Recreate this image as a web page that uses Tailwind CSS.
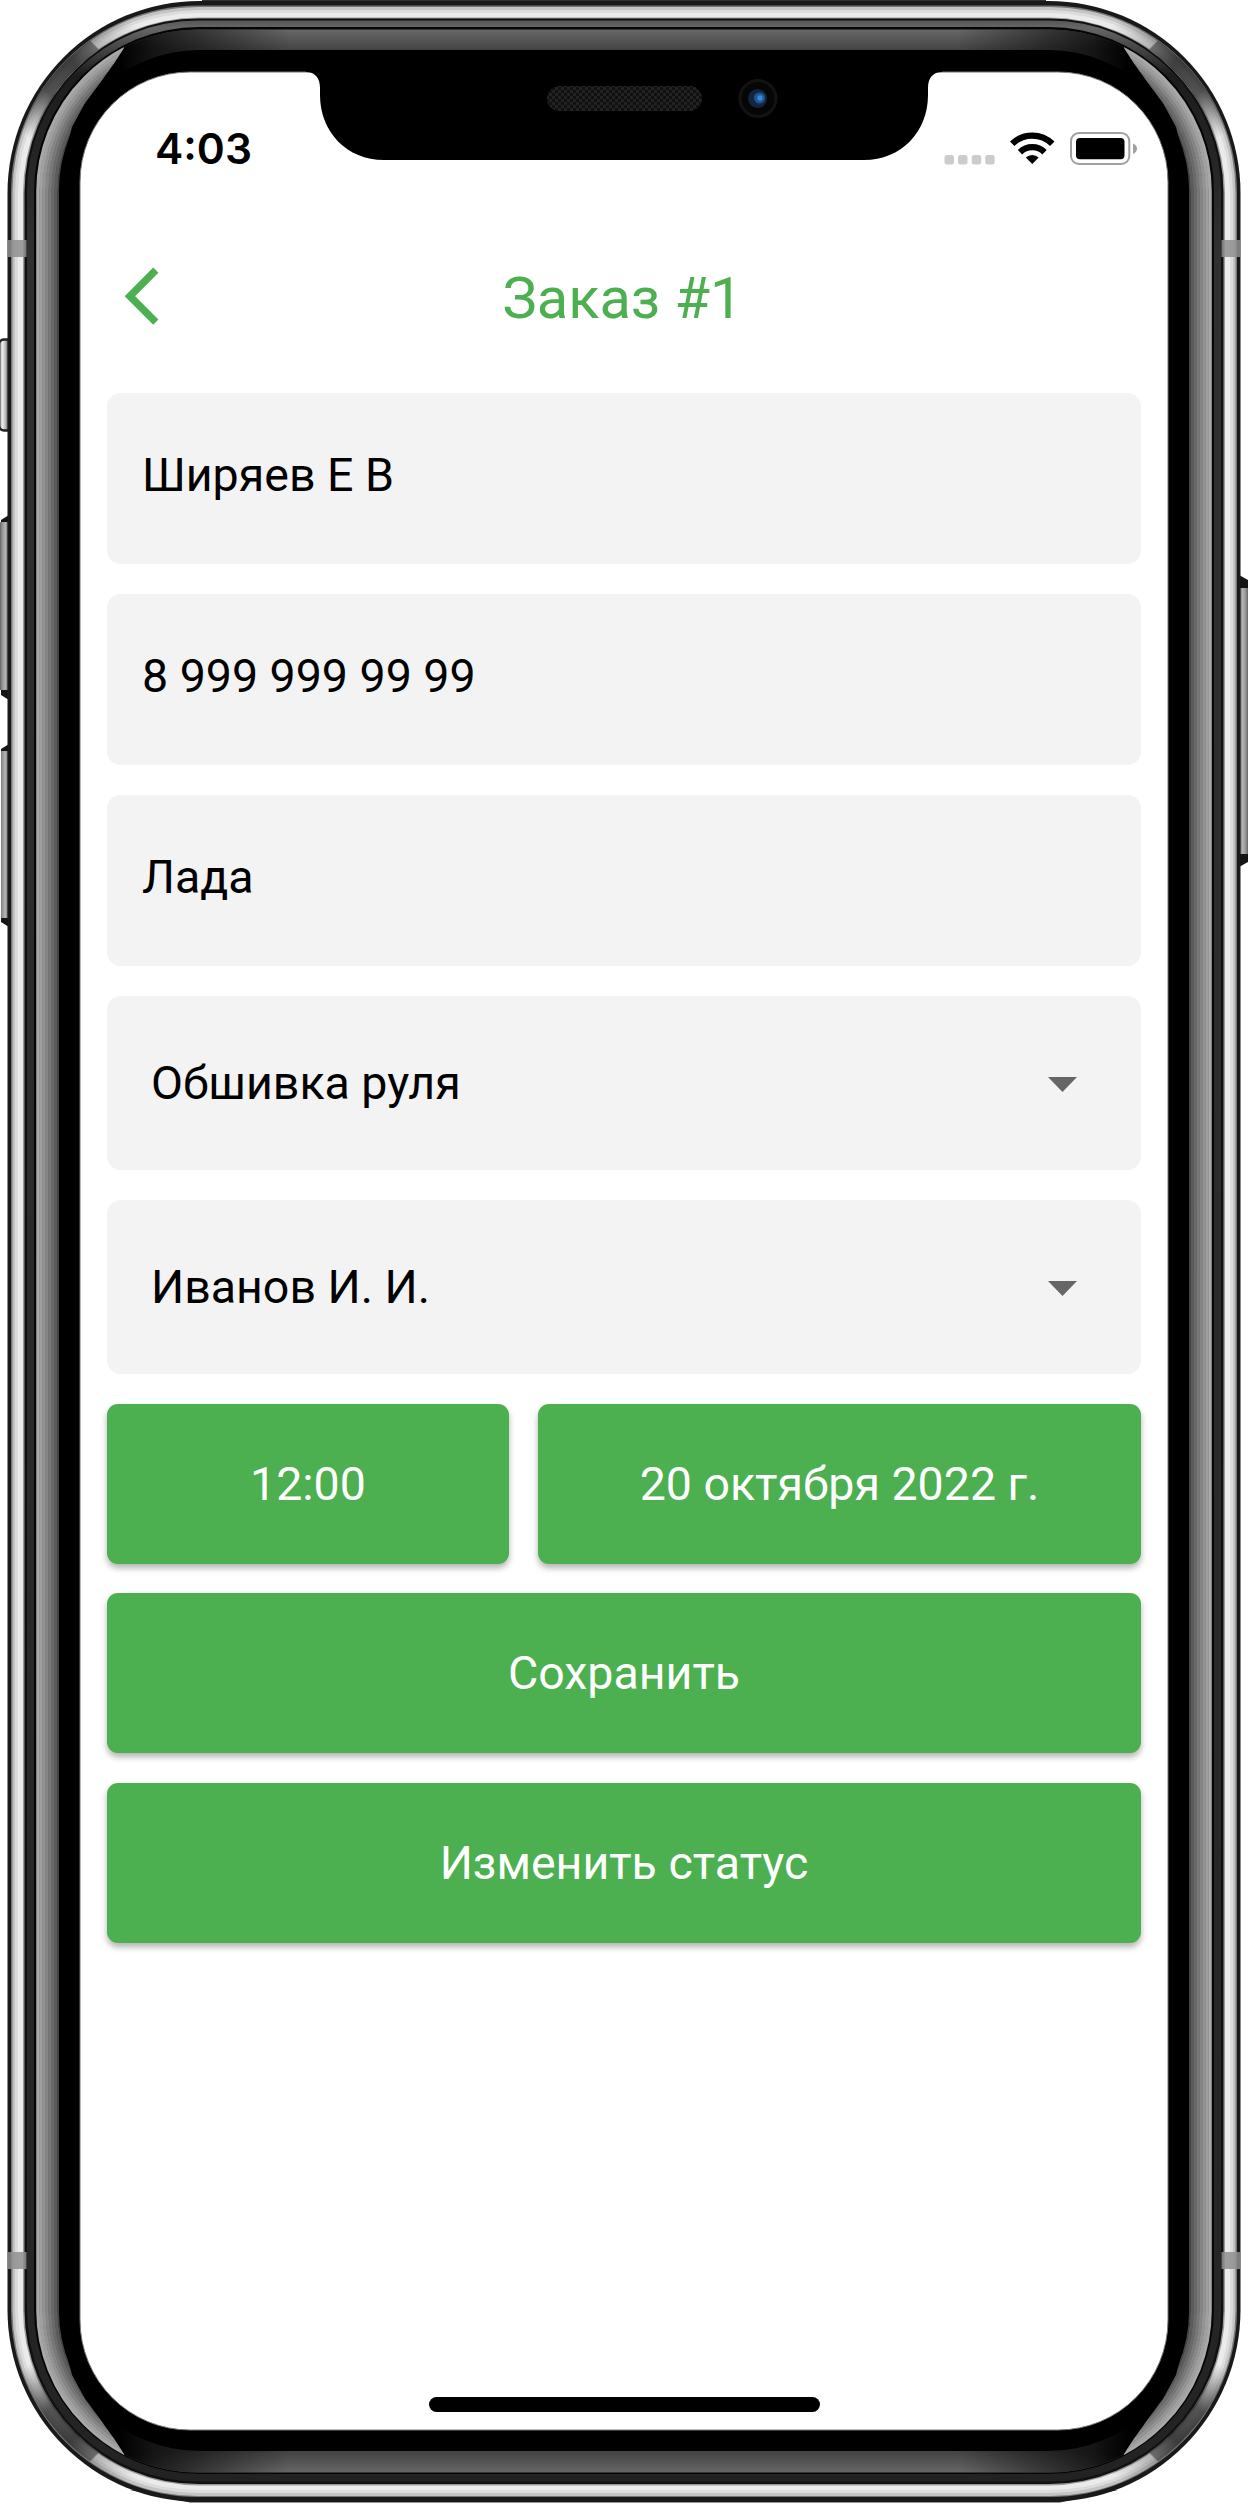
<!DOCTYPE html>
<html lang="ru">
<head>
<meta charset="utf-8">
<title>Заказ #1</title>
<script src="https://cdn.jsdelivr.net/npm/@tailwindcss/browser@4"></script>
</head>
<body class="bg-white">
<div class="relative w-[1248px] h-[2508px] overflow-hidden bg-white font-[Roboto,sans-serif]">

  <!-- Device body -->
  <svg class="absolute inset-0" width="1248" height="2508" viewBox="0 0 1248 2508" fill="none">
    <defs>
      <linearGradient id="top" x1="0" y1="0" x2="0" y2="2502" gradientUnits="userSpaceOnUse">
        <stop offset="0.0116" stop-color="#686868"/><stop offset="0.0198" stop-color="#444"/>
        <stop offset="0.9802" stop-color="#444"/><stop offset="0.9884" stop-color="#686868"/>
      </linearGradient>
      <linearGradient id="fade" x1="120" y1="0" x2="290" y2="0" gradientUnits="userSpaceOnUse">
        <stop offset="0" stop-color="#000"/><stop offset="0.2" stop-color="#000" stop-opacity=".7"/><stop offset="1" stop-color="#000" stop-opacity="0"/>
      </linearGradient>
      <linearGradient id="edge" x1="0" y1="0" x2="0" y2="2502" gradientUnits="userSpaceOnUse">
        <stop offset="0.008" stop-color="#555"/><stop offset="0.011" stop-color="#666"/><stop offset="0.03" stop-color="#1c1c1c"/><stop offset="0.1" stop-color="#303030"/>
        <stop offset="0.9" stop-color="#262626"/><stop offset="1" stop-color="#222"/>
      </linearGradient>
      <linearGradient id="shine" x1="20" y1="130" x2="130" y2="20" gradientUnits="userSpaceOnUse">
        <stop offset="0" stop-color="#333" stop-opacity="0"/><stop offset=".3" stop-color="#222" stop-opacity=".75"/><stop offset=".55" stop-color="#222" stop-opacity=".85"/><stop offset=".72" stop-color="#333" stop-opacity=".7"/><stop offset=".73" stop-color="#333" stop-opacity=".3"/><stop offset="1" stop-color="#333" stop-opacity="0"/>
      </linearGradient>
      <linearGradient id="key" x1="0" y1="0" x2="9" y2="0" gradientUnits="userSpaceOnUse">
        <stop offset="0" stop-color="#666"/><stop offset=".3" stop-color="#999"/><stop offset=".6" stop-color="#b5b5b5"/><stop offset=".85" stop-color="#777"/><stop offset="1" stop-color="#333"/>
      </linearGradient>
      <linearGradient id="toggle" x1="0" y1="0" x2="9" y2="0" gradientUnits="userSpaceOnUse">
        <stop offset="0" stop-color="#999"/><stop offset=".25" stop-color="#f0f0f0"/><stop offset=".6" stop-color="#bbb"/><stop offset="1" stop-color="#444"/>
      </linearGradient>
      <clipPath id="side"><path d="M0 0H110L124 48L115 62L100 83L85 103L72 127L62 165V2337L72 2375L85 2399L100 2419L115 2440L124 2454L110 2502H0Z"/></clipPath>
      <clipPath id="corner"><path d="M0 0H220V220H0Z"/></clipPath>
      <pattern id="mesh" width="6" height="6" patternUnits="userSpaceOnUse"><path d="M0 0H3V3H0ZM3 3H6V6H3Z" fill="#222"/></pattern>
      <g id="half">
        <g clip-path="url(#side)" stroke-width="3.5">
          <rect x="38" y="30.500" width="1172" height="2441" rx="161" stroke="#a8a8a8"/>
          <rect x="41" y="33.500" width="1166" height="2435" rx="158" stroke="#a0a0a0"/>
          <rect x="44" y="36.500" width="1160" height="2429" rx="155" stroke="#949494"/>
          <rect x="47" y="39.500" width="1154" height="2423" rx="152" stroke="#868686"/>
          <rect x="50" y="42.500" width="1148" height="2417" rx="149" stroke="#787878"/>
          <rect x="53" y="45.500" width="1142" height="2411" rx="146" stroke="#6a6a6a"/>
          <rect x="56" y="48.500" width="1136" height="2405" rx="143" stroke="#5c5c5c"/>
          <rect x="58.500" y="51" width="1131" height="2400" rx="140" stroke="#444" stroke-width="2"/>
        </g>
        <rect x="7.500" y="240" width="19" height="17" fill="#8f8f8f" fill-opacity=".85"/>
        <rect x="7.500" y="2252" width="19" height="17" fill="#8f8f8f" fill-opacity=".85"/>
      </g>
      <g id="glare" clip-path="url(#corner)"><rect x="17.700" y="12" width="1212.600" height="2478" rx="181" stroke="url(#shine)" stroke-width="12.500"/></g>
    </defs>

    <!-- Side buttons -->
    <rect x="-1" y="339.500" width="14" height="91" rx="5" fill="url(#toggle)" stroke="#222" stroke-width="2.500"/>
    <path d="M1 520L9 515V700L1 695Z" fill="#151515"/><path d="M0 522H9V690H0Z" fill="url(#key)"/>
    <path d="M1 749L9 744V927L1 922Z" fill="#151515"/><path d="M1 751H9V918H1Z" fill="url(#key)"/>
    <path d="M1248 580L1239 575V867L1248 862Z" fill="#151515"/><g transform="translate(1248 0) scale(-1 1)"><path d="M0 588H9V854H0Z" fill="url(#key)"/></g>

    <!-- Concentric frame -->
    <path d="M202 0H1046V6H202ZM130 2490H1118L1060 2502.500H190Z" fill="#333"/>
    <rect x="7.500" y="1" width="1233" height="2501" rx="192" fill="#191919"/>
    <rect x="11" y="5.500" width="1226" height="2491.500" rx="187" fill="#777"/>
    <rect x="12.500" y="7" width="1223" height="2489" rx="185" fill="#c4c4c4"/>
    <rect x="15" y="10" width="1218" height="2483" rx="183" fill="#dcdcdc"/>
    <rect x="18" y="13" width="1212" height="2477" rx="180" fill="#ebebeb"/>
    <rect x="23" y="17.500" width="1202" height="2468" rx="176" fill="#999"/>
    <use href="#glare"/>
    <use href="#glare" transform="translate(1248 0) scale(-1 1)"/>
    <use href="#glare" transform="translate(0 2502) scale(1 -1)"/>
    <use href="#glare" transform="translate(1248 2502) scale(-1 -1)"/>
    <rect x="24.500" y="18.500" width="1199" height="2465.500" rx="174" fill="#101010"/>
    <rect x="27" y="20.500" width="1194" height="2461" rx="171" fill="url(#edge)"/>
    <rect x="34" y="27" width="1180" height="2447" rx="165" fill="#050505"/>
    <rect x="36.500" y="29.500" width="1175" height="2443" rx="162" fill="url(#top)"/>
    <rect x="36.500" y="29.500" width="590" height="2443" rx="162" fill="url(#fade)"/>
    <g transform="translate(1248 0) scale(-1 1)"><rect x="36.500" y="29.500" width="590" height="2443" rx="162" fill="url(#fade)"/></g>
    <use href="#half"/>
    <use href="#half" transform="translate(1248 0) scale(-1 1)"/>
    <rect x="59" y="50" width="1130" height="2401" rx="140" fill="#000"/>
    <rect x="80" y="72" width="1088" height="2358" rx="110" fill="#fff" stroke="#777" stroke-width="1"/>

    <!-- Notch, speaker and camera -->
    <path d="M306 71V72C315 72 320 78 320 88V95C320 132 347 160 384 160H864C901 160 928 132 928 95V88C928 78 933 72 942 72V71Z" fill="#000"/>
    <rect x="547" y="86" width="155" height="25" rx="12.500" fill="#111"/>
    <rect x="547" y="86" width="155" height="25" rx="12.500" fill="url(#mesh)"/>
    <circle cx="758" cy="98.500" r="18" fill="#060606" stroke="#131313" stroke-width="3"/>
    <circle cx="757.500" cy="98.500" r="9.500" fill="#14253f"/><circle cx="759.500" cy="98" r="5.500" fill="#1f5590"/><circle cx="760" cy="98" r="2.700" fill="#3a86cf"/>
  </svg>

  <!-- App screen -->
  <div class="relative flex flex-col h-[2430px] pt-[120px] pl-[107px] pr-[107px]">
    <div class="flex h-[56px] items-center justify-between pl-[48px] pr-[3px]">
      <span class="pt-[2px] font-[Inter] text-[42.5px] font-semibold leading-[56px] text-black">4:03</span>
      <svg width="198" height="40" viewBox="940 128 198 40" class="block">
        <g fill="#ccc"><rect x="944.500" y="155" width="9.500" height="9.500" rx="2.500"/><rect x="958" y="155" width="9.500" height="9.500" rx="2.500"/><rect x="971.700" y="155" width="9.500" height="9.500" rx="2.500"/><rect x="985.200" y="155" width="9.500" height="9.500" rx="2.500"/></g>
        <g fill="none" stroke="#000" stroke-width="6.200"><path d="M1012.200 143.800A28.500 28.500 0 0 1 1052.300 143.800"/><path d="M1020 152.200A17.500 17.500 0 0 1 1044.500 152.200"/></g>
        <path d="M1025.800 157.500A9.500 9.500 0 0 1 1038.700 157.500L1032.250 164Z"/>
        <rect x="1071" y="133" width="58.300" height="31" rx="8" fill="none" stroke="#a0a0a0" stroke-width="2"/>
        <rect x="1076" y="138" width="48.500" height="21.300" rx="4"/><path d="M1133 143.500Q1137 145.500 1137 148.700T1133 154Z" fill="#a0a0a0"/>
      </svg>
    </div>
    <header class="relative flex h-[216.5px] items-center justify-center pt-[27px] pr-[3px]">
      <svg class="absolute left-[17px] top-[91px]" width="36" height="60" viewBox="0 0 36 60" fill="none" stroke="#4caf50" stroke-width="7.400"><path d="M31.800 3.200L5.900 29.200L31.800 55.200"/></svg>
      <h1 class="text-[57.8px] leading-[72px] text-[#4caf50]">Заказ #1</h1>
    </header>
    <main class="flex flex-col gap-[29.5px] text-[46.5px] leading-[54px] text-black">
      <div class="flex h-[171.5px] items-center rounded-[14px] bg-[#f3f3f3] px-[35px] pb-[7px]">Ширяев Е В</div>
      <div class="flex h-[171.5px] items-center rounded-[14px] bg-[#f3f3f3] px-[35px] pb-[7px]">8 999 999 99 99</div>
      <div class="flex h-[171.5px] items-center rounded-[14px] bg-[#f3f3f3] px-[35px] pb-[7px]">Лада</div>
      <div class="flex h-[174.5px] items-center justify-between rounded-[14px] bg-[#f3f3f3] pl-[44px] pr-[64px]">Обшивка руля<svg class="mt-[3px]" width="29" height="15" viewBox="0 0 29 15"><path d="M0 0H29L14.500 15Z" fill="#666"/></svg></div>
      <div class="flex h-[174.5px] items-center justify-between rounded-[14px] bg-[#f3f3f3] pl-[44px] pr-[64px]">Иванов И. И.<svg class="mt-[3px]" width="29" height="15" viewBox="0 0 29 15"><path d="M0 0H29L14.500 15Z" fill="#666"/></svg></div>
      <div class="flex gap-[29px] text-white">
        <button class="h-[160px] w-[402px] rounded-[11px] bg-[#4caf50] shadow-[0_4px_6px_rgba(0,0,0,0.3)]">12:00</button>
        <button class="h-[160px] flex-1 rounded-[11px] bg-[#4caf50] shadow-[0_4px_6px_rgba(0,0,0,0.3)]">20 октября 2022 г.</button>
      </div>
      <button class="h-[160px] rounded-[11px] bg-[#4caf50] text-white shadow-[0_4px_6px_rgba(0,0,0,0.3)]">Сохранить</button>
      <button class="h-[160px] rounded-[11px] bg-[#4caf50] text-white shadow-[0_4px_6px_rgba(0,0,0,0.3)]">Изменить статус</button>
    </main>
    <div class="mt-auto mb-[18px] h-[15px] w-[391px] self-center rounded-full bg-black"></div>
  </div>
</div>
</body>
</html>
